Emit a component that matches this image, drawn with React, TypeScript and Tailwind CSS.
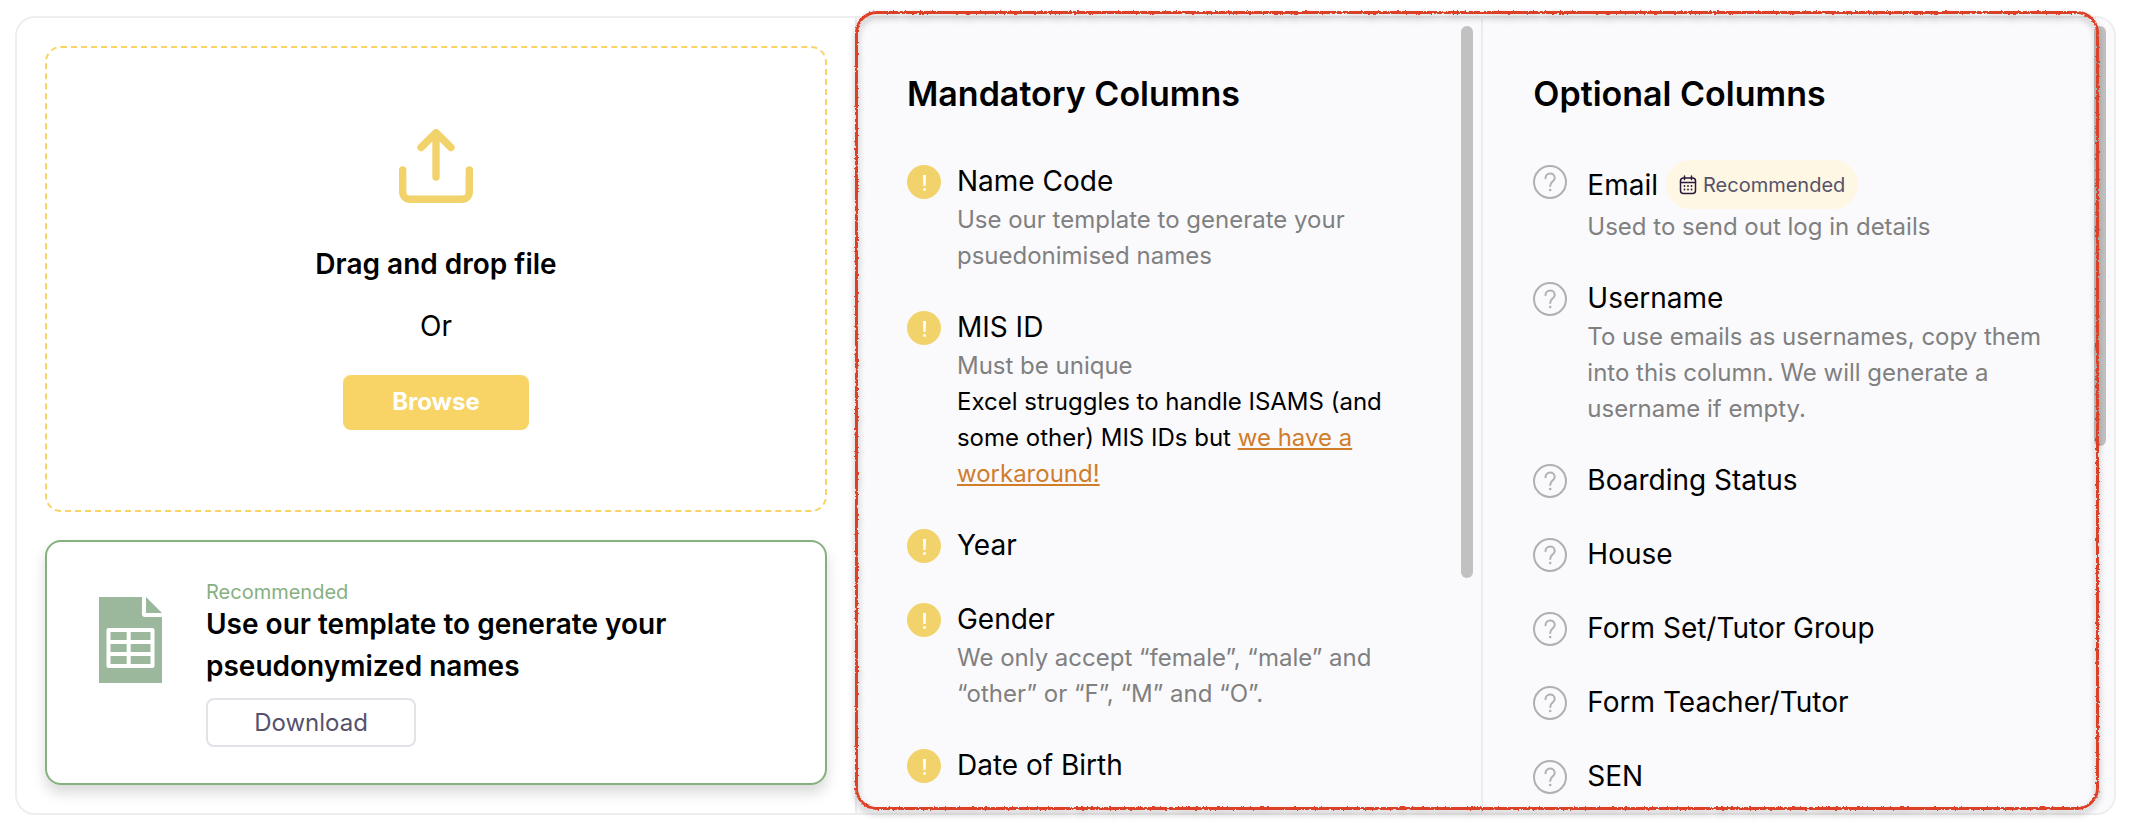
import React from 'react'

type Column = {
    name: string,
    badge?: string,
    description?: string,
    note?: React.ReactNode
}

const mandatory: Column[] = [
    { name: 'Name Code', description: 'Use our template to generate your psuedonimised names' },
    {
        name: 'MIS ID',
        description: 'Must be unique',
        note: <>Excel struggles to handle ISAMS (and some other) MIS IDs but <a href="#workaround" className="text-[#d07d2c] underline">we have a workaround!</a></>
    },
    { name: 'Year' },
    { name: 'Gender', description: 'We only accept “female”, “male” and “other” or “F”, “M” and “O”.' },
    { name: 'Date of Birth' }
]

const optional: Column[] = [
    { name: 'Email', badge: 'Recommended', description: 'Used to send out log in details' },
    { name: 'Username', description: 'To use emails as usernames, copy them into this column. We will generate a username if empty.' },
    { name: 'Boarding Status' },
    { name: 'House' },
    { name: 'Form Set/Tutor Group' },
    { name: 'Form Teacher/Tutor' },
    { name: 'SEN' }
]

function UploadIcon() {
    return (
        <svg width="74" height="74" viewBox="0 0 74 74" fill="none" stroke="#f2d36b" strokeWidth="7.4" strokeLinecap="round" strokeLinejoin="round" aria-hidden="true">
            <path d="M3.7 41v22a7.3 7.3 0 0 0 7.3 7.3h52a7.3 7.3 0 0 0 7.3-7.3V41" />
            <path d="M37 48V4M22 18.5L37 3.7l15 14.8" />
        </svg>
    )
}

function SheetIcon() {
    return (
        <svg className="shrink-0" width="63" height="86" viewBox="0 0 63 86" aria-hidden="true">
            <path d="M0 0h43v17a3 3 0 0 0 3 3h17v66H0z" fill="#9bb89c" />
            <path d="M47 0l16 16H47z" fill="#9bb89c" />
            <path d="M9.5 33h44v36h-44zM9.5 45h44M9.5 57h44M29.7 33v36" fill="none" stroke="#fff" strokeWidth="4" strokeLinejoin="round" />
        </svg>
    )
}

function CalendarIcon() {
    return (
        <svg width="18" height="20" viewBox="0 0 18 20" fill="none" stroke="#2a1a3e" strokeWidth="1.5" strokeLinecap="round" aria-hidden="true">
            <rect x="1.5" y="3" width="15" height="15.5" rx="3" />
            <path d="M1.5 7.5h15M5.5 1v3.5M12.5 1v3.5" />
            <path d="M5.5 11h.01M9 11h.01M12.5 11h.01M5.5 14.5h.01M9 14.5h.01M12.5 14.5h.01" strokeWidth="1.8" />
        </svg>
    )
}

function RequiredIcon() {
    return (
        <svg className="mt-[5px] mr-4 shrink-0" width="34" height="34" viewBox="0 0 34 34" aria-hidden="true">
            <circle cx="17" cy="17" r="17" fill="#f2d36b" />
            <path d="M16 10h3l-.4 11h-2.2zM16.2 23.2h2.6v2.6h-2.6z" fill="#fff" />
        </svg>
    )
}

function OptionalIcon() {
    return (
        <svg className="mt-[5px] mr-5 shrink-0" width="34" height="34" viewBox="0 0 34 34" fill="none" stroke="#b0b0b2" strokeWidth="2" strokeLinecap="round" aria-hidden="true">
            <circle cx="17" cy="17" r="16" />
            <path d="M12.5 13.2c0-2.7 2-4.6 4.6-4.6s4.6 1.8 4.6 4.3c0 3.7-4.5 3.7-4.5 8" />
            <path d="M17.2 25h.01" strokeWidth="2.6" />
        </svg>
    )
}

// hand-drawn looking outline around both column lists
function Highlight() {
    return (
        <>
            <svg className="absolute" width="0" height="0" aria-hidden="true">
                <filter id="rough" x="-1%" y="-1%" width="102%" height="102%">
                    <feTurbulence type="fractalNoise" baseFrequency="0.4" numOctaves="2" seed="4" />
                    <feDisplacementMap in="SourceGraphic" scale="3" xChannelSelector="R" yChannelSelector="G" />
                </filter>
            </svg>
            <div className="pointer-events-none absolute -top-[5px] right-[17px] bottom-[5px] left-[40%] rounded-[22px] border-3 border-[#dc4028] [filter:url(#rough)_drop-shadow(0_4px_3px_rgba(0,0,0,0.3))]" />
        </>
    )
}

type ListProps = {
    title: string,
    columns: Column[],
    icon: React.ReactNode,
    thumb: string
}

function ColumnList({ title, columns, icon, thumb }: ListProps) {
    return (
        <section className="relative min-h-0 overflow-hidden border-l-2 border-[#ececee] bg-[#fafafd] pr-[52px] pl-[50px] pt-[52px]">
            <h2 className="text-[34px] leading-[48px] font-semibold">{title}</h2>
            <ul className="mt-[42px] flex flex-col gap-8">
                {columns.map((column) => (
                    <li key={column.name} className="flex items-start">
                        {icon}
                        <div className="min-w-0">
                            <div className="flex items-center gap-2">
                                <h3 className="text-[28px] leading-[42px]">{column.name}</h3>
                                {column.badge &&
                                    <span className="flex h-[49px] items-center gap-1.5 rounded-full bg-[#fef7e3] px-[13px] text-[20px] text-[#55526b]">
                                        <CalendarIcon />
                                        {column.badge}
                                    </span>
                                }
                            </div>
                            {column.description && <p className="text-[24px] leading-[36px] text-[#808080]">{column.description}</p>}
                            {column.note && <p className="text-[24px] leading-[36px]">{column.note}</p>}
                        </div>
                    </li>
                ))}
            </ul>
            <div className={`absolute top-2 right-2 w-3 rounded-full bg-[#c1c1c1] ${thumb}`} />
        </section>
    )
}

export default function App() {
    return (
        <main className="h-screen bg-white pt-4 pr-8 pb-[17px] pl-[15px] font-['Inter',sans-serif] text-black">
            <div className="relative h-full">
                <div className="grid h-full grid-cols-[400fr_299fr_302fr] overflow-hidden rounded-[20px] border-2 border-[#eeeeee]">
                    <div className="flex min-h-0 flex-col gap-7 p-7">
                        <div className="flex flex-1 flex-col items-center justify-center rounded-2xl border-2 border-dashed border-[#f7d465]">
                            <UploadIcon />
                            <p className="mt-10 text-[28px] leading-[42px] font-semibold">Drag and drop file</p>
                            <p className="mt-5 text-[28px] leading-[42px]">Or</p>
                            <button type="button" className="mt-7 h-[55px] w-[186px] rounded-lg bg-[#f7d465] text-[24px] font-bold text-white">Browse</button>
                        </div>
                        <div className="flex h-[245px] items-start gap-11 rounded-2xl border-2 border-[#86b07f] pt-[39px] pr-10 pl-[52px] shadow-[0_8px_14px_rgba(0,0,0,0.15)]">
                            <div className="pt-4"><SheetIcon /></div>
                            <div>
                                <p className="text-[20px] leading-[22px] text-[#86b07f]">Recommended</p>
                                <p className="text-[28px] leading-[42px] font-semibold">Use our template to generate your pseudonymized names</p>
                                <button type="button" className="mt-[11px] h-[49px] w-[210px] rounded-lg border-2 border-[#e2e2e8] text-[24px] text-[#55526b]">Download</button>
                            </div>
                        </div>
                    </div>
                    <ColumnList title="Mandatory Columns" columns={mandatory} icon={<RequiredIcon />} thumb="h-[552px]" />
                    <ColumnList title="Optional Columns" columns={optional} icon={<OptionalIcon />} thumb="h-[420px]" />
                </div>
                <Highlight />
            </div>
        </main>
    )
}
